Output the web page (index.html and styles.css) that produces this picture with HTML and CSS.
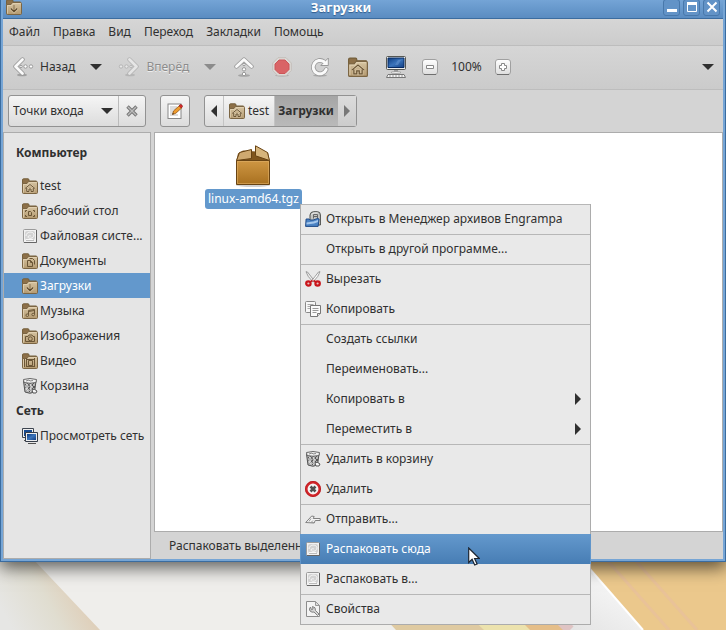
FILE: index.html
```html
<!doctype html>
<html lang="ru">
  <head>
    <meta charset="UTF-8" />
    <meta name="viewport" content="width=device-width, initial-scale=1.0" />
    <title>Загрузки</title>
    <link rel="stylesheet" href="styles.css">
  </head>

  <body>
    <svg width="0" height="0" class="sprite" aria-hidden="true">
      <defs>
        <linearGradient id="tan" x1="0" y1="0" x2="0" y2="1">
          <stop offset="0" stop-color="#d6c4a2" />
          <stop offset="1" stop-color="#b49a70" />
        </linearGradient>
        <linearGradient id="steel" x1="0" y1="0" x2="0" y2="1">
          <stop offset="0" stop-color="#ffffff" />
          <stop offset="1" stop-color="#dedede" />
        </linearGradient>
        <linearGradient id="screen" x1="0" y1="0" x2="1" y2="1">
          <stop offset="0" stop-color="#0c3b80" />
          <stop offset="0.5" stop-color="#3b74bb" />
          <stop offset="1" stop-color="#123f84" />
        </linearGradient>
        <linearGradient id="box" x1="0" y1="0" x2="0" y2="1">
          <stop offset="0" stop-color="#cf9744" />
          <stop offset="1" stop-color="#a8701f" />
        </linearGradient>
      </defs>

      <symbol id="folder" viewBox="0 0 16 16">
        <path d="M.5 14V2Q.5.8 1.6.8H6Q7 .8 7 2v1h7.500v3z" fill="#8d7048" stroke="#75603c" />
        <path d="M.5 14.500V5.500H5L6.500 3.500H14.500Q15.500 3.500 15.500 4.500V14.500Q15.500 15.500 14.500 15.500H1.500Q.5 15.500.5 14.500z" fill="url(#tan)" stroke="#7b6543" />
        <path d="M1.500 14.500v-8h4l1.500-2h7.500" fill="none" stroke="#e6d6b8" stroke-opacity=".7" />
      </symbol>
      <symbol id="folder-home" viewBox="0 0 16 16">
        <use href="#folder" />
        <path d="M3 10.500 8 6.500l5 4M4.700 10v3.500h2.300v-2.500h2v2.500h2.300V10" fill="none" stroke="#efe2c8" stroke-width="2" stroke-opacity=".5" />
        <path d="M3 10.500 8 6.500l5 4M4.700 10v3.500h2.300v-2.500h2v2.500h2.300V10" fill="none" stroke="#6b5636" />
      </symbol>
      <symbol id="folder-desktop" viewBox="0 0 16 16">
        <use href="#folder" />
        <path d="M5 7.500H3.500V9M11 7.500h1.500V9M5 13.500H3.500V12M11 13.500h1.500V12M6.500 8.500h2l1 1v3h-3z" fill="none" stroke="#6b5636" />
      </symbol>
      <symbol id="folder-docs" viewBox="0 0 16 16">
        <use href="#folder" />
        <path d="M5.500 7.500h3l2 2v4h-5zM7.500 5.500h3l2 2v4M8.500 7.500v2h2" fill="none" stroke="#6b5636" />
      </symbol>
      <symbol id="folder-down" viewBox="0 0 16 16">
        <use href="#folder" />
        <path d="m4.500 9.500 3.500 3.500 3.500-3.500" fill="none" stroke="#efe2c8" stroke-width="2.500" stroke-opacity=".5" />
        <path d="m4.800 9.500 3.200 3.200 3.200-3.200M8 10.500v1M8 6.500v1M8 8.500v1" fill="none" stroke="#5c4728" stroke-width="1.200" />
      </symbol>
      <symbol id="folder-music" viewBox="0 0 16 16">
        <use href="#folder" />
        <path d="M6.500 12V7.500l6-1v5M6.500 8.500l6-1" fill="none" stroke="#6b5636" />
        <circle cx="5.300" cy="12.200" r="1.300" fill="#cbb68f" stroke="#6b5636" />
        <circle cx="11.200" cy="11.500" r="1.300" fill="#cbb68f" stroke="#6b5636" />
      </symbol>
      <symbol id="folder-photo" viewBox="0 0 16 16">
        <use href="#folder" />
        <path d="M3.500 13.500v-5h2.500l1-1.500h3l1 1.500h1.500v5z" fill="none" stroke="#6b5636" />
        <circle cx="8.300" cy="10.800" r="2" fill="none" stroke="#6b5636" />
      </symbol>
      <symbol id="folder-video" viewBox="0 0 16 16">
        <use href="#folder" />
        <path d="M4.500 5v9M12.500 5v9M6.500 7.500h4v5h-4zM2.500 6v8M5 6.500h7M5 13.500h7" fill="none" stroke="#6b5636" />
      </symbol>
      <symbol id="drive" viewBox="0 0 16 16">
        <rect x="1.500" y="1.500" width="13" height="13" rx="1" fill="#f2f2f2" stroke="#9a9a9a" />
        <path d="M14.500 2v12.500H2" fill="none" stroke="#666" />
        <rect x="3" y="3" width="10" height="9" rx="2" fill="#d2d2d2" />
        <path d="M4 8c0-5 8-5 8-1s-6 4-6 2 3-1 3-1M4 11.500h7" fill="none" stroke="#f8f8f8" />
        <path d="M4 12.500h8" stroke="#bbb" />
      </symbol>
      <symbol id="trash" viewBox="0 0 16 16">
        <path d="M1.500 3 3 14q5 2.500 9.500 0L14 3z" fill="#b8b8b8" stroke="#505050" />
        <path d="m3 6 7 8M5 5l7 8M8 5l5 5M12 5 4 13M8.500 5 3.500 10M13 8l-6 6" stroke="#555" fill="none" />
        <path d="M5 6v7M9 6v8" stroke="#f4f4f4" />
        <path d="M1.500 1.500Q8-.5 14.500 1.500L14 4.500Q8 6 2 4.500z" fill="#efefef" stroke="#666" />
        <path d="m4 3 3-1 1 1 3-.5" stroke="#888" fill="none" />
        <path d="m10 12.500 2-1.500 3 2-1 2h-3z" fill="#f5f5f5" stroke="#555" />
      </symbol>
      <symbol id="network" viewBox="0 0 16 16">
        <path d="M.5.500h11v9H.5z" fill="#eee" stroke="#3d4550" />
        <path d="M2 2h8v6H2z" fill="#174b91" />
        <path d="M2 12.500h4" stroke="#555" />
        <path d="M3.500 4.500h12v9h-12z" fill="#eee" stroke="#343c48" />
        <path d="M5 6h9v6H5z" fill="url(#screen)" />
        <path d="M6 15.500h8" stroke="#505050" />
      </symbol>
      <symbol id="engrampa" viewBox="0 0 16 16">
        <path d="M5 9V4Q5.500.7 8.500.7h4Q15.400.7 15.400 4v10H8z" fill="#c4c5c2" stroke="#4c4e4b" />
        <path d="M8.500 7.500V3.500h4v6M8.500 5.500h4" fill="none" stroke="#666" />
        <path d="M6.500 3.500q1-1.500 3-1.500h3" stroke="#eee" fill="none" />
        <path d="m.6 15.400.5-7.400h3l1 1h3l4.500-1.500 1.500.5-1 7.400z" fill="#4b83c4" stroke="#204a87" />
        <path d="m1.500 11.500 7-1 4.500-1.500v2l-4 1.500-7.500 1z" fill="#a5c7ec" />
      </symbol>
      <symbol id="scissors" viewBox="0 0 16 16">
        <path d="M1 .7 2.500 1l7 9-1.500 1Q2 5 1 .7z" fill="#eee" stroke="#888" stroke-width=".8" />
        <path d="M15 .7 13.500 1l-7 9 1.500 1Q14 5 15 .7z" fill="#fafafa" stroke="#888" stroke-width=".8" />
        <g fill="#e8c0c0" stroke="#c9151b" stroke-width="2.200">
          <ellipse cx="3.400" cy="12.500" rx="2.200" ry="2.200" />
          <ellipse cx="12.600" cy="12.500" rx="2.200" ry="2.200" />
        </g>
        <path d="m5 11 2.500-1.500M11 11l-2.500-1.500" stroke="#c9151b" stroke-width="1.500" />
      </symbol>
      <symbol id="copy" viewBox="0 0 16 16">
        <rect x=".5" y=".5" width="10" height="11" rx="1" fill="#f7f7f7" stroke="#888" />
        <path d="M2.500 3.500h6M2.500 5.500h6M2.500 7.500h3" stroke="#aaa" />
        <path d="M5.500 4.500h10v8l-3 3h-7z" fill="#fafafa" stroke="#777" />
        <path d="M7.500 7.500h6M7.500 9.500h6M7.500 11.500h4" stroke="#999" />
        <path d="M12.500 15.500v-3h3" fill="#ddd" stroke="#777" />
      </symbol>
      <symbol id="delete" viewBox="0 0 16 16">
        <circle cx="8" cy="8" r="6.700" fill="#f5f5f5" stroke="#d3262b" stroke-width="2.500" />
        <circle cx="8" cy="8" r="7.600" fill="none" stroke="#b3151a" stroke-width=".7" />
        <path d="m5.500 5.500 5 5m0-5-5 5" stroke="#505050" stroke-width="2.600" />
      </symbol>
      <symbol id="send" viewBox="0 0 16 16">
        <path d="m.7 11.500 6-6.500 2.500.5-1 2h7v2h-5l-1 2.500z" fill="#f3f3f3" stroke="#808080" />
        <path d="M6 7.500 4 10.500M8 9.500l-2 2M3 11.500h6" stroke="#999" fill="none" />
      </symbol>
      <symbol id="properties" viewBox="0 0 16 16">
        <path d="M1.500.500h9l4 4v11h-13z" fill="#f3f3f3" stroke="#8c8c8c" />
        <path d="M10.500.500v4h4z" fill="#ddd" stroke="#999" />
        <path d="M5.500 6Q3.500 8 5 10q2 1.800 4 1l3.500 3.500 1.500-1.500L10.500 9.500Q11 6 7.500 5.500L8 8l-1.500.8z" fill="#d4d4d4" stroke="#777" stroke-width=".9" />
      </symbol>
      <symbol id="arrow-left" viewBox="0 0 22 20">
        <ellipse cx="10" cy="18" rx="5" ry="1.300" fill="#000" opacity=".22" />
        <path d="M10.500 2.500 3.500 9.500l7 7" fill="none" stroke="#999" stroke-width="4.400" stroke-linecap="round" stroke-linejoin="round" />
        <path d="M10.500 2.500 3.500 9.500l7 7" fill="none" stroke="#fafafa" stroke-width="2.800" stroke-linecap="round" stroke-linejoin="round" />
        <g fill="#fff" stroke="#999">
          <circle cx="9" cy="9.500" r="1.200" /><circle cx="13.500" cy="9.500" r="1.700" /><circle cx="19" cy="9.500" r="1.700" />
        </g>
      </symbol>
      <symbol id="up" viewBox="0 0 20 20">
        <ellipse cx="10" cy="18.500" rx="6" ry="1.300" fill="#000" opacity=".2" />
        <path d="m2.500 9.500 7.500-7 7.500 7" fill="none" stroke="#999" stroke-width="4.400" stroke-linecap="round" stroke-linejoin="round" />
        <path d="m2.500 9.500 7.500-7 7.500 7" fill="none" stroke="#fafafa" stroke-width="2.800" stroke-linecap="round" stroke-linejoin="round" />
        <g fill="#fff" stroke="#999">
          <circle cx="10" cy="7.500" r="1.200" /><circle cx="10" cy="12.300" r="1.700" /><circle cx="10" cy="17" r="1.700" />
        </g>
      </symbol>
      <symbol id="stop" viewBox="0 0 20 20">
        <ellipse cx="10" cy="18.500" rx="7" ry="1.200" fill="#000" opacity=".15" />
        <path d="M6 .7h8L19.300 6v7.500L14 18.800H6L.7 13.500V6z" fill="#ddd9d5" stroke="#c3bfbb" />
        <path d="M7 3h6l4 4v5.500l-4 4H7l-4-4V7z" fill="#d96466" stroke="#cc5558" />
      </symbol>
      <symbol id="reload" viewBox="0 0 20 20">
        <ellipse cx="10" cy="18.500" rx="7" ry="1.200" fill="#000" opacity=".18" />
        <g fill="none" stroke-linejoin="round">
          <path d="M14 4.800A6.700 6.700 0 1 0 16.200 12.500" stroke="#999" stroke-width="4.600" stroke-linecap="round" />
          <path d="M18.300 1v7.500h-7.500z" fill="#fafafa" stroke="#999" />
          <path d="M14 4.800A6.700 6.700 0 1 0 16.200 12.500" stroke="#fafafa" stroke-width="3" stroke-linecap="round" />
        </g>
      </symbol>
      <symbol id="computer" viewBox="0 0 20 22">
        <rect x=".5" y=".5" width="19" height="13" rx="1" fill="#ededeb" stroke="#555753" />
        <path d="M2 2h16v9.500H2z" fill="url(#screen)" stroke="#062a62" />
        <path d="m9 9 3-5h3l-3 5" fill="#6391cb" opacity=".6" />
        <path d="M8 14h4v2.500H8z" fill="#999" />
        <ellipse cx="10" cy="16.500" rx="5" ry="1" fill="#eee" stroke="#888" stroke-width=".6" />
        <path d="M2 18.500h16l1.500 3H.5z" fill="#f4f4f4" stroke="#777" />
        <path d="M3 20h14" stroke="#999" stroke-dasharray="2 1" />
      </symbol>
      <symbol id="zoom-box" viewBox="0 0 16 16">
        <rect x=".5" y=".5" width="15" height="15" rx="2.500" fill="url(#steel)" stroke="#a0a0a0" />
        <path d="M2 15.500h12" stroke="#6f6f6f" />
      </symbol>
      <symbol id="zoom-out" viewBox="0 0 16 16">
        <use href="#zoom-box" />
        <path d="M4.500 6.500h7v3h-7z" fill="#fff" stroke="#888" />
      </symbol>
      <symbol id="zoom-in" viewBox="0 0 16 16">
        <use href="#zoom-box" />
        <path d="M6.500 4.500h3v2h2v3h-2v2h-3v-2h-2v-3h2z" fill="#fff" stroke="#888" />
      </symbol>
      <symbol id="edit" viewBox="0 0 16 16">
        <rect x="1" y="1" width="13" height="14.500" fill="#fff" stroke="#888" />
        <path d="M3 4h7M3 6h6M3 8h4M3 10h3M3 12h8" stroke="#bbb" />
        <path d="m5.500 11.500 1-3.500 6-5.500 2.300 2.300-6 5.500z" fill="#ef9c2c" stroke="#8f5214" stroke-width=".8" />
        <path d="m12 2.800 1.500-1.300q1.800 0 2 2L14.300 5z" fill="#d92b2b" stroke="#991919" stroke-width=".7" />
        <path d="m5.400 11.600.5-1.500 1 .9z" fill="#222" />
      </symbol>
      <symbol id="clear" viewBox="0 0 12 12">
        <path d="m1.500 1.500 9 9m0-9-9 9" stroke="#777" stroke-width="3.400" />
        <path d="m2 2 8 8m0-8-8 8" stroke="#bcbcbc" stroke-width="1.400" />
      </symbol>
      <symbol id="caret" viewBox="0 0 12 6"><path d="M0 0h12L6 6z" fill="currentColor" /></symbol>
      <symbol id="caret-left" viewBox="0 0 6 12"><path d="M6 0v12L0 6z" fill="currentColor" /></symbol>
      <symbol id="caret-right" viewBox="0 0 6 12"><path d="M0 0v12l6-6z" fill="currentColor" /></symbol>
      <symbol id="package" viewBox="0 0 36 42">
        <ellipse cx="18" cy="40" rx="17" ry="2" fill="#000" opacity=".18" />
        <path d="m3 8.500 5-3 25 2 1.500 7.500h-33z" fill="#80551c" />
        <path d="M1.500 15.500h33v24h-33z" fill="url(#box)" stroke="#684313" />
        <path d="M2.500 16.500h31v22h-31z" fill="none" stroke="#e0b069" stroke-opacity=".6" />
        <path d="m1.500 15.500 3-8 12-3v9z" fill="#cfa970" stroke="#684313" />
        <path d="M20.500.800v10l14 4.700-2-8z" fill="#d7b57c" stroke="#684313" />
      </symbol>
    </svg>

    <div class="desktop">
      <svg class="wallpaper" viewBox="0 0 726 630" preserveAspectRatio="xMidYMax slice" aria-hidden="true">
        <defs>
          <linearGradient id="dune" gradientUnits="userSpaceOnUse" x1="10" y1="625" x2="75" y2="590">
            <stop offset="0" stop-color="#e6e6e4" />
            <stop offset="0.6" stop-color="#e0ddd0" />
            <stop offset="1" stop-color="#dfd0bb" />
          </linearGradient>
          <linearGradient id="glass" x1="0" y1="1" x2="1" y2="0">
            <stop offset="0" stop-color="#dedede" />
            <stop offset="1" stop-color="#ffffff" />
          </linearGradient>
        </defs>
        <path d="M0 0h726v630H0z" fill="#efeeeb" />
        <path d="M0 524 100 630H0z" fill="url(#dune)" />
        <path d="M330 560h396v70H396z" fill="#dfcaa1" />
        <path d="M410 560h100l21 70h-47z" fill="#ece2ad" />
        <path d="M460 560h100l20 70h-50z" fill="#e5be89" />
        <path d="M520 560h206v70H643z" fill="#ebc88c" />
        <path d="M582 560 643 630h-75l-40-45z" fill="url(#glass)" />
        <path d="m582 560 61 70" stroke="#fff" stroke-width="2" />
        <path d="m607 560 62 70M635 560l62 70" stroke="#e8bfa0" stroke-width="3" opacity=".6" />
        <path d="m520 580 50 50" stroke="#dfc4c4" stroke-width="10" />
      </svg>

      <div class="window">
        <header class="titlebar">
          <svg class="icon"><use href="#folder-down" /></svg>
          <h1>Загрузки</h1>
          <button class="win-button" aria-label="Свернуть"><svg viewBox="0 0 12 12"><path d="M1 9.500h10" stroke="#fff" stroke-width="3" /></svg></button>
          <button class="win-button" aria-label="Развернуть"><svg viewBox="0 0 12 12"><path d="M1.500 2v8.500h9V2" fill="none" stroke="#fff" /><path d="M1 2.500h10" stroke="#fff" stroke-width="3" /></svg></button>
          <button class="win-button" aria-label="Закрыть"><svg viewBox="0 0 12 12"><path d="m1.500 1.500 9 9m0-9-9 9" stroke="#fff" stroke-width="2" /></svg></button>
        </header>

        <nav class="menubar">
          <button>Файл</button>
          <button>Правка</button>
          <button>Вид</button>
          <button>Переход</button>
          <button>Закладки</button>
          <button>Помощь</button>
        </nav>

        <div class="toolbar">
          <button class="nav-button"><svg class="nav-icon"><use href="#arrow-left" /></svg>Назад</button>
          <button class="drop" aria-label="История назад"><svg class="caret"><use href="#caret" /></svg></button>
          <button class="nav-button" disabled><svg class="nav-icon flip"><use href="#arrow-left" /></svg>Вперёд</button>
          <button class="drop" disabled aria-label="История вперёд"><svg class="caret"><use href="#caret" /></svg></button>
          <div class="tools">
            <button aria-label="Вверх"><svg><use href="#up" /></svg></button>
            <button aria-label="Остановить"><svg><use href="#stop" /></svg></button>
            <button aria-label="Обновить"><svg><use href="#reload" /></svg></button>
            <button aria-label="Домашняя папка"><svg><use href="#folder-home" /></svg></button>
            <button aria-label="Компьютер"><svg class="tall"><use href="#computer" /></svg></button>
          </div>
          <div class="zoom">
            <button aria-label="Уменьшить"><svg class="icon"><use href="#zoom-out" /></svg></button>
            <span>100%</span>
            <button aria-label="Увеличить"><svg class="icon"><use href="#zoom-in" /></svg></button>
          </div>
          <button class="more" aria-label="Ещё"><svg class="caret"><use href="#caret" /></svg></button>
        </div>

        <div class="location">
          <div class="side-switch">
            <select aria-label="Боковая панель">
              <option>Точки входа</option>
            </select>
            <svg class="caret"><use href="#caret" /></svg>
            <button aria-label="Закрыть панель"><svg class="clear"><use href="#clear" /></svg></button>
          </div>
          <button class="edit" aria-label="Изменить адрес"><svg class="icon"><use href="#edit" /></svg></button>
          <div class="path">
            <button class="path-arrow" aria-label="Назад по пути"><svg><use href="#caret-left" /></svg></button>
            <button class="path-item"><svg class="icon"><use href="#folder-home" /></svg>test</button>
            <button class="path-item current">Загрузки</button>
            <button class="path-arrow" disabled aria-label="Вперёд по пути"><svg><use href="#caret-right" /></svg></button>
          </div>
        </div>

        <div class="panes">
          <aside class="sidebar">
            <h2 class="first">Компьютер</h2>
            <a href="#"><svg class="icon"><use href="#folder-home" /></svg><span>test</span></a>
            <a href="#"><svg class="icon"><use href="#folder-desktop" /></svg><span>Рабочий стол</span></a>
            <a href="#"><svg class="icon"><use href="#drive" /></svg><span>Файловая систе...</span></a>
            <a href="#"><svg class="icon"><use href="#folder-docs" /></svg><span>Документы</span></a>
            <a href="#" class="active"><svg class="icon"><use href="#folder-down" /></svg><span>Загрузки</span></a>
            <a href="#"><svg class="icon"><use href="#folder-music" /></svg><span>Музыка</span></a>
            <a href="#"><svg class="icon"><use href="#folder-photo" /></svg><span>Изображения</span></a>
            <a href="#"><svg class="icon"><use href="#folder-video" /></svg><span>Видео</span></a>
            <a href="#"><svg class="icon"><use href="#trash" /></svg><span>Корзина</span></a>
            <h2>Сеть</h2>
            <a href="#"><svg class="icon"><use href="#network" /></svg><span>Просмотреть сеть</span></a>
          </aside>

          <div class="content">
            <main class="files">
              <a href="#" class="file">
                <svg><use href="#package" /></svg>
                <span>linux-amd64.tgz</span>
              </a>
            </main>
            <footer class="statusbar">Распаковать выделенн</footer>
          </div>
        </div>
      </div>

      <div class="context-menu" role="menu">
        <button role="menuitem" class="sep"><svg class="icon"><use href="#engrampa" /></svg>Открыть в Менеджер архивов Engrampa</button>
        <button role="menuitem" class="sep"><i class="icon"></i>Открыть в другой программе...</button>
        <button role="menuitem" class="sep"><svg class="icon"><use href="#scissors" /></svg>Вырезать</button>
        <button role="menuitem"><svg class="icon"><use href="#copy" /></svg>Копировать</button>
        <button role="menuitem" class="sep"><i class="icon"></i>Создать ссылки</button>
        <button role="menuitem"><i class="icon"></i>Переименовать...</button>
        <button role="menuitem"><i class="icon"></i>Копировать в<svg class="submenu"><use href="#caret-right" /></svg></button>
        <button role="menuitem"><i class="icon"></i>Переместить в<svg class="submenu"><use href="#caret-right" /></svg></button>
        <button role="menuitem" class="sep"><svg class="icon"><use href="#trash" /></svg>Удалить в корзину</button>
        <button role="menuitem"><svg class="icon"><use href="#delete" /></svg>Удалить</button>
        <button role="menuitem" class="sep"><svg class="icon"><use href="#send" /></svg>Отправить...</button>
        <button role="menuitem" class="hover"><svg class="icon"><use href="#drive" /></svg>Распаковать сюда</button>
        <button role="menuitem"><svg class="icon"><use href="#drive" /></svg>Распаковать в...</button>
        <button role="menuitem" class="sep"><svg class="icon"><use href="#properties" /></svg>Свойства</button>
        <svg class="cursor" viewBox="0 0 12 19" aria-hidden="true">
          <path d="M.7 1v14.500l3.400-3.200 2.600 5.700 2.400-1-2.500-5.500h4.700z" fill="#fff" stroke="#1b2430" stroke-width="1.200" />
        </svg>
      </div>
    </div>
  </body>
</html>
```

FILE: styles.css
```css
:root {
  --bg-color: #d4d4d4;
  --base-color: #e5e5e5;
  --menu-color: #e9e9e9;
  --text-color: #303030;
  --text-disabled: #8c8c8c;
  --border-color: #acacac;
  --frame-color: #3b6c9f;
  --frame-light: #76a5d5;
  --selected: #6398cc;
}

* {
  margin: 0;
  padding: 0;
  box-sizing: border-box;
}

body {
  font: 12px/18px 'Noto Sans', 'Open Sans', sans-serif;
  color: var(--text-color);
}

button,
select {
  font: inherit;
  color: inherit;
  white-space: nowrap;
  background: none;
  border: none;
}

a {
  color: inherit;
  text-decoration: none;
}

svg {
  display: block;
  flex: none;
}

.sprite,
.wallpaper {
  position: absolute;
}

.wallpaper {
  top: 0;
  left: 0;
  width: 100%;
  height: 100%;
}

.icon {
  flex: none;
  width: 16px;
  height: 16px;
}

.caret {
  width: 12px;
  height: 6px;
}

.desktop {
  position: relative;
  display: flex;
  min-height: 100vh;
  padding-bottom: 68px;
  overflow: hidden;
}

/* window frame */
.window {
  position: relative;
  flex: 1;
  display: flex;
  flex-direction: column;
  min-width: 0;
  padding: 0 2px 2px;
  background: var(--frame-light);
  border: 1px solid var(--frame-color);
  border-top: none;
  box-shadow: 0 6px 16px rgba(0, 0, 0, 0.6);
}

.titlebar {
  display: flex;
  align-items: center;
  height: 19px;
  padding: 0 3px 4px;
  background: linear-gradient(#74a4d6, #5a8cc1);
  border-bottom: 1px solid var(--frame-color);
}

.titlebar h1 {
  flex: 1;
  font-size: 13px;
  line-height: 14px;
  text-align: center;
  color: #fff;
  text-shadow: 0 1px 1px #315c8c;
}

.win-button {
  display: flex;
  align-items: center;
  justify-content: center;
  width: 17px;
  height: 17px;
  margin-left: 3px;
  border: 1px solid #4878ab;
  border-radius: 3px;
  background: #6293c7;
}

.win-button svg {
  width: 12px;
  height: 12px;
}

.menubar {
  display: flex;
  gap: 13px;
  height: 27px;
  padding: 0 6px;
  background: linear-gradient(#d6d6d6, #cccccc);
  border-bottom: 1px solid #bdbdbd;
}

/* toolbar */
.toolbar {
  display: flex;
  align-items: center;
  height: 44px;
  padding: 0 9px 2px;
  background: linear-gradient(#d6d6d6, #cbcbcb);
  border-bottom: 1px solid #bdbdbd;
}

.toolbar button:disabled {
  color: var(--text-disabled);
  text-shadow: 0 1px #eee;
}

.nav-button {
  display: flex;
  align-items: center;
  gap: 6px;
}

.nav-button:disabled svg {
  opacity: 0.5;
}

.nav-icon {
  width: 22px;
  height: 20px;
}

.flip {
  transform: scaleX(-1);
}

.drop {
  margin: 0 16px 0 15px;
}

.tools {
  display: flex;
  align-items: center;
  gap: 18px;
  margin-left: 2px;
}

.tools svg {
  width: 20px;
  height: 20px;
}

.tools .tall {
  height: 22px;
}

.zoom {
  display: flex;
  align-items: center;
  gap: 13px;
  margin-left: 16px;
}

.more {
  margin-left: auto;
}

/* location bar */
.location {
  display: flex;
  gap: 14px;
  height: 42px;
  padding: 5px;
  background: var(--bg-color);
}

.side-switch,
.edit,
.path {
  display: flex;
  align-items: center;
  height: 32px;
  border: 1px solid #929292;
  border-radius: 3px;
  background: linear-gradient(#f5f5f5, #dcdcdc);
}

.side-switch {
  width: 138px;
}

.side-switch select {
  flex: 1;
  height: 100%;
  margin-right: -18px;
  padding: 0 4px;
  appearance: none;
}

.side-switch .caret {
  pointer-events: none;
}

.side-switch button {
  display: flex;
  align-items: center;
  justify-content: center;
  width: 27px;
  height: 100%;
  margin-left: 5px;
  border-left: 1px solid #bbb;
}

.clear {
  width: 12px;
  height: 12px;
}

.edit {
  justify-content: center;
  width: 30px;
}

.path button {
  display: flex;
  align-items: center;
  justify-content: center;
  height: 100%;
}

.path-arrow {
  width: 18px;
}

.path-arrow svg,
.submenu {
  width: 6px;
  height: 12px;
}

.path-arrow:disabled {
  color: #777;
  background: linear-gradient(#dcdcdc, #cccccc);
}

.path-item {
  gap: 3px;
  padding: 0 5px;
  border-left: 1px solid #c4c4c4;
}

.path .current {
  padding: 0 4px 0 3px;
  font-weight: bold;
  background: linear-gradient(#a5a5a5, #bababa);
}

/* panes */
.panes {
  flex: 1;
  display: flex;
  gap: 3px;
  background: var(--bg-color);
}

.sidebar {
  width: 148px;
  padding-bottom: 8px;
  background: var(--base-color);
  border: 1px solid var(--border-color);
}

.sidebar h2 {
  padding: 0 12px;
  font-size: 12px;
  line-height: 25px;
}

.sidebar .first {
  line-height: 40px;
}

.sidebar a {
  display: flex;
  align-items: center;
  gap: 2px;
  height: 25px;
  padding-left: 18px;
  white-space: nowrap;
}

.sidebar .active {
  color: #fff;
  background: var(--selected);
}

.content {
  flex: 1;
  display: flex;
  flex-direction: column;
  min-width: 0;
}

.files {
  flex: 1;
  padding: 12px 50px;
  background: #fff;
  border: 1px solid var(--border-color);
}

.file {
  display: inline-flex;
  flex-direction: column;
  align-items: center;
  gap: 2px;
}

.file svg {
  width: 36px;
  height: 42px;
}

.file span {
  padding: 1px 3px;
  color: #fff;
  background: var(--selected);
  border-radius: 3px;
}

.statusbar {
  height: 27px;
  padding: 5px 15px;
}

/* context menu over the file list */
.context-menu {
  position: absolute;
  top: 204px;
  left: 300px;
  width: 291px;
  background: var(--menu-color);
  border: 1px solid var(--border-color);
  border-top: none;
}

.context-menu button {
  display: flex;
  align-items: center;
  gap: 5px;
  width: 100%;
  height: 30px;
  padding: 0 9px 2px 4px;
  border-top: 1px solid transparent;
}

.context-menu .sep {
  border-top-color: #b7b7b7;
}

.context-menu .hover {
  color: #fff;
  background: linear-gradient(#6499cd, #477db4) border-box;
  box-shadow: -1px 0 #6095ca, 1px 0 #6095ca;
}

.submenu {
  margin-left: auto;
}

.cursor {
  position: absolute;
  top: 343px;
  left: 167px;
  width: 12px;
  height: 19px;
}
```
